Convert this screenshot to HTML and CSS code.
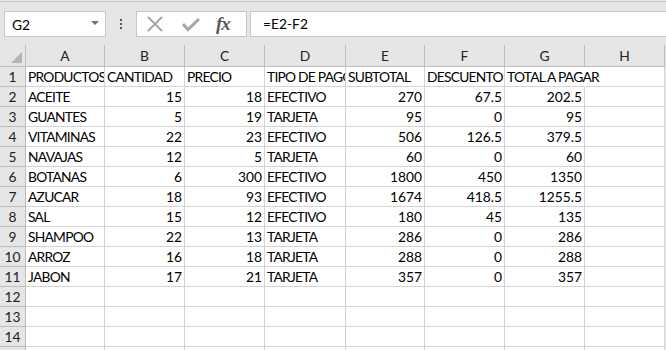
FILE: index.html
```html
<!DOCTYPE html>
<html lang="es">
  <head>
    <meta charset="UTF-8" />
    <meta name="viewport" content="width=device-width, initial-scale=1.0" />
    <title>Hoja de cálculo - Productos</title>
    <link rel="stylesheet" href="styles.css">
  </head>
  <body>
    <!-- Barra de fórmulas -->
    <div class="toolbar">
      <div class="namebox">
        <span>G2</span>
        <span class="caret"></span>
      </div>
      <div class="grip"><i></i><i></i><i></i></div>
      <div class="fbuttons">
        <svg class="ico" width="18" height="16" viewBox="0 0 18 16">
          <path d="M2 1 L16 15 M16 1 L2 15" stroke="#a6a6a6" stroke-width="2" fill="none" />
        </svg>
        <svg class="ico" width="18" height="16" viewBox="0 0 18 16">
          <path d="M1 8 L6 13.5 L17 3" stroke="#a6a6a6" stroke-width="3" fill="none" />
        </svg>
        <span class="fx">fx</span>
      </div>
      <div class="formula">=E2-F2</div>
    </div>

    <!-- Cuadrícula -->
    <div class="sheet" id="sheet"></div>

    <script>
      const cols = ["A", "B", "C", "D", "E", "F", "G", "H"];
      const rows = [
        ["PRODUCTOS", "CANTIDAD", "PRECIO", "TIPO DE PAGO", "SUBTOTAL", "DESCUENTO", "TOTAL A PAGAR", ""],
        ["ACEITE", 15, 18, "EFECTIVO", 270, 67.5, 202.5, ""],
        ["GUANTES", 5, 19, "TARJETA", 95, 0, 95, ""],
        ["VITAMINAS", 22, 23, "EFECTIVO", 506, 126.5, 379.5, ""],
        ["NAVAJAS", 12, 5, "TARJETA", 60, 0, 60, ""],
        ["BOTANAS", 6, 300, "EFECTIVO", 1800, 450, 1350, ""],
        ["AZUCAR", 18, 93, "EFECTIVO", 1674, 418.5, 1255.5, ""],
        ["SAL", 15, 12, "EFECTIVO", 180, 45, 135, ""],
        ["SHAMPOO", 22, 13, "TARJETA", 286, 0, 286, ""],
        ["ARROZ", 16, 18, "TARJETA", 288, 0, 288, ""],
        ["JABON", 17, 21, "TARJETA", 357, 0, 357, ""],
      ];

      const sheet = document.getElementById("sheet");

      function addCell(cls, text) {
        const div = document.createElement("div");
        div.className = cls;
        div.textContent = text;
        sheet.appendChild(div);
        return div;
      }

      // Encabezados de columna
      const corner = addCell("corner", "");
      corner.innerHTML = '<span class="selall"></span>';
      cols.forEach((c) => addCell("colhead", c));

      // Filas (la 15 apenas asoma en el borde inferior)
      for (let r = 0; r < 15; r++) {
        addCell("rowhead", r < 14 ? r + 1 : "");
        const data = rows[r] || [];
        cols.forEach((c, i) => {
          const value = data[i] === undefined ? "" : data[i];
          let cls = "cell";
          if (typeof value === "number") cls += " num";
          // el texto de G1 se desborda hacia H1 vacía
          if (r === 0 && i === 6) cls += " spill";
          addCell(cls, value);
        });
      }
    </script>
  </body>
</html>
```

FILE: styles.css
```css
body {
  margin: 0;
  background-color: #e6e6e6;
  font-family: Lato, "Open Sans", sans-serif;
  font-size: 13.8px;
  color: #000;
  overflow: hidden;
}
.toolbar {
  display: flex;
  align-items: center;
  height: 44px;
  border-top: 1px solid #c6c6c6;
  margin-top: 1px;
  box-sizing: border-box;
  padding: 9px 0 8px 4px;
}
.namebox {
  display: flex;
  align-items: center;
  justify-content: space-between;
  width: 102px;
  height: 26px;
  box-sizing: border-box;
  padding: 0 6px 0 7px;
  background-color: white;
  border: 1px solid #c6c6c6;
}
.caret {
  width: 0;
  height: 0;
  border-left: 4px solid transparent;
  border-right: 4px solid transparent;
  border-top: 4px solid #707070;
  margin-top: -2px;
}
.grip {
  display: flex;
  flex-direction: column;
  gap: 2px;
  width: 30px;
  align-items: center;
}
.grip i {
  display: block;
  width: 2px;
  height: 2px;
  background-color: #555;
}
.fbuttons {
  display: flex;
  align-items: center;
  width: 111px;
  height: 26px;
  box-sizing: border-box;
  padding-left: 9px;
  gap: 18px;
  background-color: white;
  border: 1px solid #c6c6c6;
}
.fx {
  font-family: "Liberation Serif", serif;
  font-style: italic;
  font-weight: bold;
  font-size: 19px;
  color: #5a5a5a;
  margin-left: -2px;
  letter-spacing: -1px;
}
.formula {
  flex: 1;
  height: 26px;
  box-sizing: border-box;
  margin-left: 3px;
  padding: 2px 12px;
  background-color: white;
  border: 1px solid #c6c6c6;
  border-right: none;
  line-height: 20px;
}
.sheet {
  display: grid;
  grid-template-columns: 26px 79px 80px 80px 81px 79px 80px 80px 80px;
  grid-template-rows: 22px;
  grid-auto-rows: 20px;
  width: 665px;
}
.sheet > div {
  box-sizing: border-box;
  border-right: 1px solid #d4d4d4;
  border-bottom: 1px solid #d4d4d4;
  white-space: nowrap;
  overflow: hidden;
  line-height: 19px;
}
.corner {
  position: relative;
  background-color: #e6e6e6;
  border-color: #bdbdbd !important;
}
.selall {
  position: absolute;
  right: 3px;
  bottom: 3px;
  width: 0;
  height: 0;
  border-left: 11px solid transparent;
  border-bottom: 11px solid #b4b4b4;
}
.colhead {
  background-color: #e6e6e6;
  text-align: center;
  color: #222;
  line-height: 22px !important;
  border-right-color: #bdbdbd !important;
  border-bottom-color: #bdbdbd !important;
}
.rowhead {
  background-color: #e6e6e6;
  text-align: center;
  color: #222;
  border-right-color: #bdbdbd !important;
  border-bottom-color: #bdbdbd !important;
}
.cell {
  background-color: white;
  padding: 0 1px 0 2px;
  letter-spacing: -0.75px;
}
.cell.num {
  text-align: right;
  letter-spacing: 0;
  padding-right: 2px;
}
.cell.spill {
  overflow: visible !important;
  border-right-color: white !important;
  position: relative;
  z-index: 1;
}
```
